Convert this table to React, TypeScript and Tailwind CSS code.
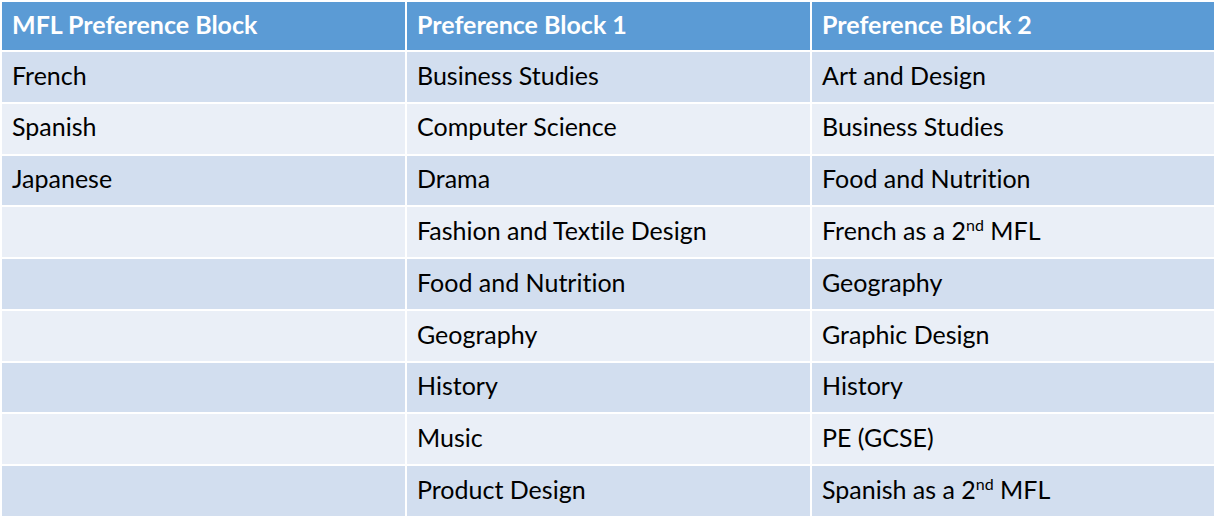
import React from "react";

const Sup = () => <sup className="text-[16px] relative top-[-9px]">nd</sup>;

const rows: [React.ReactNode, React.ReactNode, React.ReactNode][] = [
  ["French", "Business Studies", "Art and Design"],
  ["Spanish", "Computer Science", "Business Studies"],
  ["Japanese", "Drama", "Food and Nutrition"],
  ["", "Fashion and Textile Design", <span>French as a 2<Sup /> MFL</span>],
  ["", "Food and Nutrition", "Geography"],
  ["", "Geography", "Graphic Design"],
  ["", "History", "History"],
  ["", "Music", "PE (GCSE)"],
  ["", "Product Design", <span>Spanish as a 2<Sup /> MFL</span>],
];

export default function App() {
  return (
    <div
      className="w-[1216px] h-[516px] bg-white pt-[2px] px-[2px] grid grid-cols-[403px_403px_1fr] grid-rows-[48px_repeat(9,1fr)] gap-[2px] text-[25px] text-black [font-variant-ligatures:none]"
      style={{ fontFamily: "Lato, 'Noto Sans', sans-serif" }}
    >
      {["MFL Preference Block", "Preference Block 1", "Preference Block 2"].map((h) => (
        <div key={h} className="bg-[#5b9bd5] text-white font-bold flex items-center pl-[10px] pb-[3px]">
          {h}
        </div>
      ))}
      {rows.map((r, i) =>
        r.map((c, j) => (
          <div
            key={`${i}-${j}`}
            className={`${i % 2 === 0 ? "bg-[#d2deef]" : "bg-[#eaeff7]"} flex items-center pl-[10px] pb-[3px] whitespace-nowrap`}
          >
            {c}
          </div>
        ))
      )}
    </div>
  );
}
